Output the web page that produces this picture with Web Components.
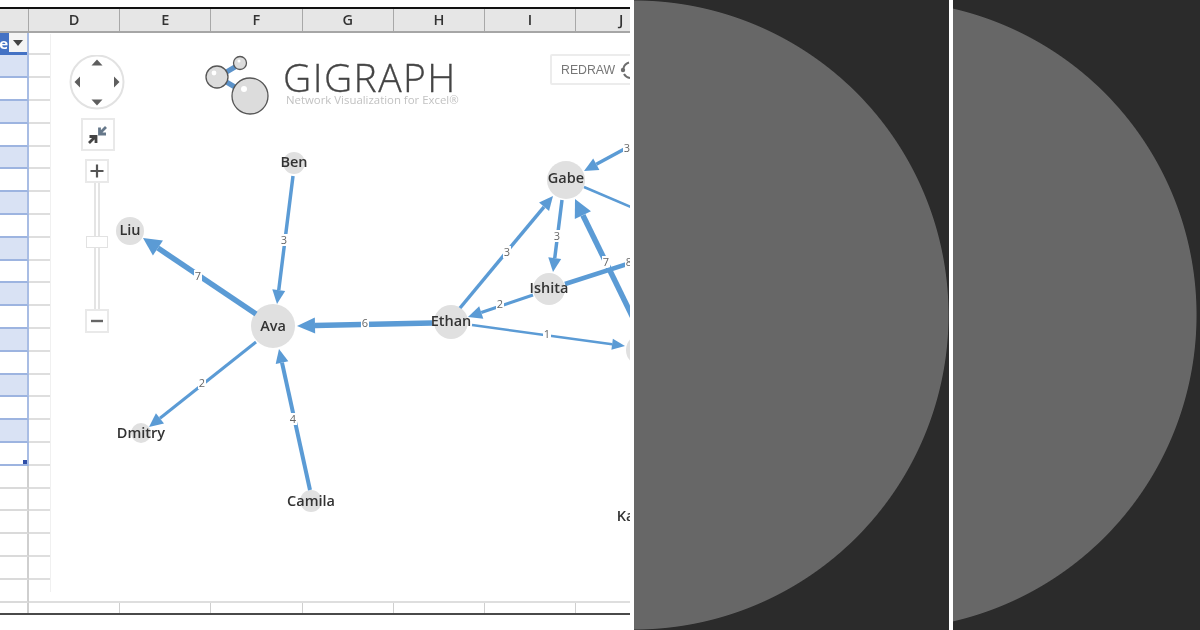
<!DOCTYPE html>
<html>
<head>
<meta charset="utf-8">
<title>Gigraph</title>
<style>
  html, body { margin: 0; padding: 0; background: #fff; }
  body { width: 1200px; height: 630px; overflow: hidden; font-family: "Open Sans", sans-serif; }
</style>
</head>
<body>
<promo-card>
  <excel-sheet>
    <graph-chart></graph-chart>
  </excel-sheet>
  <half-disc style="--w:315px;--cx:0px"></half-disc>
  <half-disc style="--w:247px;--cx:-71px"></half-disc>
</promo-card>

<script>
class PromoCard extends HTMLElement {
  constructor() {
    super();
    this.attachShadow({ mode: "open" }).innerHTML = `
      <style>
        :host { display: flex; gap: 4px; width: 1200px; height: 630px; background: #fff; }
      </style>
      <slot></slot>`;
  }
}

class HalfDisc extends HTMLElement {
  constructor() {
    super();
    this.attachShadow({ mode: "open" }).innerHTML = `
      <style>
        :host {
          display: block;
          flex: none;
          width: var(--w);
          height: 630px;
          background: radial-gradient(circle 315px at var(--cx) 50%, #676767 99.7%, #2b2b2b 100%);
        }
      </style>`;
  }
}

class ExcelSheet extends HTMLElement {
  constructor() {
    super();
    const letters = ["D", "E", "F", "G", "H", "I", "J"];
    const heads = letters.map((l) => `<div class="head">${l}</div>`).join("");
    const ticks = letters.map(() => `<div class="tick"></div>`).join("");

    let rows = `
      <div class="row title">
        <div class="a"><span class="clip">e</span><span class="filter"><i></i></span></div>
        <div class="b"></div>
      </div>`;
    for (let i = 0; i < 24; i++) {
      const inTable = i < 18;
      const band = inTable && i % 2 === 0 ? " band" : "";
      const table = inTable ? " table" : "";
      const handle = i === 17 ? `<i class="handle"></i>` : "";
      rows += `<div class="row${table}${band}"><div class="a">${handle}</div><div class="b"></div></div>`;
    }

    this.attachShadow({ mode: "open" }).innerHTML = `
      <style>
        :host {
          display: block;
          position: relative;
          flex: none;
          width: 630px;
          height: 630px;
          overflow: hidden;
          background: #fff;
          filter: blur(0.35px);
        }
        .frame { display: flex; flex-direction: column; padding-top: 7px; height: 615px; box-sizing: border-box; border-bottom: 2px solid #4a4a4a; }
        .heads {
          display: flex;
          flex: none;
          height: 22px;
          border-top: 2px solid #111;
          border-bottom: 2px solid #a6a6a6;
          background: #e6e6e6;
        }
        .corner { flex: none; width: 28px; box-sizing: border-box; }
        .head {
          flex: none;
          width: 91.2px;
          box-sizing: border-box;
          border-left: 1px solid #a8a8a8;
          text-align: center;
          font: 600 14.5px/22px "Open Sans", sans-serif;
          color: #333;
        }
        .row { display: flex; flex: none; height: 22.8px; box-sizing: border-box; }
        .row .a {
          position: relative;
          flex: none;
          width: 29px;
          box-sizing: border-box;
          border-right: 2px solid #cfcfcf;
          border-bottom: 2px solid #dadada;
        }
        .row .b { flex: 1; border-bottom: 2px solid #dedede; }
        .row.table .a { border-right-color: #a9bde4; border-bottom-color: #9db4e0; }
        .row.band .a { background: #d9e2f4; }
        .row.title { height: 22.4px; }
        .row.title .a {
          display: flex;
          justify-content: flex-end;
          align-items: flex-start;
          overflow: hidden;
          background: #4472c4;
          border-right-color: #a9bde4;
          border-bottom: 0;
        }
        .clip { font: 700 15px/20px "Open Sans", sans-serif; color: #fff; margin-right: 1px; }
        .filter {
          display: flex;
          align-items: center;
          justify-content: center;
          flex: none;
          width: 18px;
          height: 19px;
          background: #f4f4f4;
        }
        .filter i { border: 5px solid transparent; border-top: 6px solid #444; border-bottom: 0; }
        .handle { position: absolute; right: 0; bottom: 0; width: 4px; height: 4px; background: #2f4fa8; }
        .rows { display: flex; flex-direction: column; flex: none; }
        .foot { display: flex; flex: 1; }
        .foot .corner { border-right: 2px solid #cfcfcf; width: 29px; }
        .tick { flex: none; width: 91.2px; box-sizing: border-box; border-right: 1px solid #cfcfcf; }
        .foot .tick:first-of-type { margin-left: -1px; }
      </style>
      <div class="frame">
        <div class="heads"><div class="corner"></div>${heads}</div>
        <div class="rows">${rows}</div>
        <div class="foot"><div class="corner"></div>${ticks}</div>
      </div>
      <slot></slot>`;
  }
}

class GraphChart extends HTMLElement {
  constructor() {
    super();
    this.attachShadow({ mode: "open" }).innerHTML = `
      <style>
        :host {
          display: block;
          position: absolute;
          left: 50px;
          top: 34px;
          width: 590px;
          height: 558px;
          background: #fff;
          border-left: 1px solid #f0f0f0;
        }
        network-graph { position: absolute; inset: 0; }
        zoom-controls { position: absolute; left: 18px; top: 21px; }
        gi-logo { position: absolute; left: 153px; top: 20px; }
        redraw-button { position: absolute; left: 499px; top: 20px; }
      </style>
      <network-graph></network-graph>
      <zoom-controls></zoom-controls>
      <gi-logo></gi-logo>
      <redraw-button></redraw-button>`;
  }
}

class ZoomControls extends HTMLElement {
  constructor() {
    super();
    this.attachShadow({ mode: "open" }).innerHTML = `
      <style>
        :host { display: flex; flex-direction: column; align-items: center; width: 56px; }
        svg { display: block; }
        .fit {
          display: flex; align-items: center; justify-content: center;
          width: 34px; height: 33px; margin: 7px 0 0 2px; box-sizing: border-box;
          border: 2px solid #e9e9e9;
        }
        .btn {
          display: flex; align-items: center; justify-content: center;
          width: 24px; height: 24px; box-sizing: border-box;
          border: 2px solid #e9e9e9; flex: none; background: #fff;
        }
        .plus { margin-top: 8px; }
        .track {
          display: flex; flex-direction: column; align-items: center;
          width: 6px; height: 126px; box-sizing: border-box;
          border-left: 2px solid #e4e4e4; border-right: 2px solid #e4e4e4;
        }
        .thumb {
          flex: none; width: 22px; height: 12px; margin-top: 53px; margin-left: -8px; margin-right: -8px;
          box-sizing: border-box; border: 1px solid #e2e2e2; background: #fff;
        }
      </style>
      <svg width="56" height="56" viewBox="0 0 56 56">
        <circle cx="28" cy="27" r="26.5" fill="#fff" stroke="#e2e2e2" stroke-width="2"/>
        <g fill="#5e5e5e">
          <polygon points="28,4.5 22.5,10.5 33.5,10.5"/>
          <polygon points="28,50.5 22.5,44.5 33.5,44.5"/>
          <polygon points="5.5,27 11,21.5 11,32.5"/>
          <polygon points="50.5,27 45,21.5 45,32.5"/>
        </g>
      </svg>
      <div class="fit">
        <svg width="24" height="22" viewBox="0 0 24 22" fill="none" stroke-width="2.8">
          <path d="M20 3 13.5 9.5M13.5 3.5V10H20" stroke="#66788a"/>
          <path d="M3 19 9.5 12.5M3.5 12.5H10V19" stroke="#444"/>
        </svg>
      </div>
      <div class="btn plus">
        <svg width="14" height="14" viewBox="0 0 14 14"><path d="M7 .5v13M.5 7h13" stroke="#555" stroke-width="2.2"/></svg>
      </div>
      <div class="track"><div class="thumb"></div></div>
      <div class="btn">
        <svg width="14" height="14" viewBox="0 0 14 14"><path d="M1 7h12" stroke="#666" stroke-width="2.4"/></svg>
      </div>`;
  }
}

class GiLogo extends HTMLElement {
  constructor() {
    super();
    this.attachShadow({ mode: "open" }).innerHTML = `
      <style>
        :host { display: flex; gap: 13px; align-items: flex-start; }
        svg { display: block; flex: none; }
        .words { display: flex; flex-direction: column; padding-top: 4px; }
        .name {
          font: 300 39px/37px "Open Sans", sans-serif;
          letter-spacing: 1.45px;
          color: #444;
          -webkit-text-stroke: 0.3px #444;
          white-space: nowrap;
        }
        .sub {
          font: 400 11.4px/10px "Open Sans", sans-serif;
          color: #c2c2c2;
          margin-left: 3px;
          white-space: nowrap;
        }
      </style>
      <svg width="66" height="62" viewBox="0 0 66 62">
        <path d="M14 23 36 10M14 23 46 42" stroke="#5b92c9" stroke-width="5"/>
        <g stroke="#565656" stroke-width="1.3" fill="#dcdcdc">
          <circle cx="13" cy="23" r="11"/>
          <circle cx="36" cy="9" r="6.5"/>
          <circle cx="46" cy="42" r="18"/>
        </g>
        <g fill="#fff">
          <circle cx="10" cy="19" r="2.4"/>
          <circle cx="35" cy="7" r="1.5"/>
          <circle cx="40" cy="35" r="3"/>
        </g>
      </svg>
      <div class="words">
        <div class="name">GIGRAPH</div>
        <div class="sub">Network Visualization for Excel®</div>
      </div>`;
  }
}

class RedrawButton extends HTMLElement {
  constructor() {
    super();
    this.attachShadow({ mode: "open" }).innerHTML = `
      <style>
        :host {
          display: flex; align-items: center; gap: 4px;
          width: 110px; height: 31px; padding-left: 9px; box-sizing: border-box;
          border: 2px solid #ececec; border-radius: 2px; background: #fff;
          font: 400 12.3px "Liberation Sans", sans-serif; color: #777;
        }
        svg { flex: none; }
      </style>
      <span>REDRAW</span>
      <svg width="20" height="20" viewBox="0 0 20 20" fill="none">
        <path d="M10 2.5A8 8 0 0 0 4.5 8" stroke="#6d6d6d" stroke-width="2"/>
        <path d="M5 14A8 8 0 0 0 11 18" stroke="#6d6d6d" stroke-width="2"/>
        <circle cx="4" cy="10" r="2.2" fill="#6d6d6d"/>
      </svg>`;
  }
}

class NetworkGraph extends HTMLElement {
  constructor() {
    super();

    // page coordinates, taken off the reference: name, x, y, radius, label baseline
    const nodes = [
      ["Ben", 294, 163, 11, 167],
      ["Liu", 130, 231, 14, 235],
      ["Ava", 273, 326, 22, 331],
      ["Ethan", 451, 322, 17, 326],
      ["Gabe", 566, 180, 19, 183],
      ["Ishita", 549, 289, 16, 293],
      ["Dmitry", 141, 433, 10, 438],
      ["Camila", 311, 501, 11, 506],
      ["", 642, 350, 16, 0],
      ["Ka", 625.5, 516, 0, 521],
    ];
    // x1, y1, x2, y2, width, head length, head half width, label, label x, label y
    const edges = [
      [293, 176, 277, 304, 3.5, 14, 6.5, "3", 284, 240],
      [256, 314, 143, 238, 5.5, 18, 9, "7", 198, 276],
      [432, 323, 297, 326, 5.5, 18, 8, "6", 365, 323],
      [256, 342, 149, 427, 3, 14, 6.5, "2", 202, 383],
      [310, 490, 279, 349, 4, 14, 6.5, "4", 293, 419],
      [460, 308, 553, 196, 3.5, 14, 6.5, "3", 507, 252],
      [562, 200, 553, 272, 3.5, 14, 6.5, "3", 557, 236],
      [533, 295, 468, 317, 3, 14, 6.5, "2", 500, 304],
      [472, 325, 625, 346, 2.5, 13, 5.5, "1", 547, 334],
      [632, 145, 584, 171, 3.5, 14, 6.5, "3", 627, 148],
      [584, 187, 640, 211, 2.5, 0, 0, "", 0, 0],
      [636, 324, 575, 199, 5.5, 18, 9, "7", 606, 262],
      [565, 284, 640, 260, 4.5, 0, 0, "8", 629, 262],
    ];

    const edgeSvg = edges.map(([x1, y1, x2, y2, w, len, half, label, lx, ly]) => {
      const d = Math.hypot(x2 - x1, y2 - y1);
      const ux = (x2 - x1) / d;
      const uy = (y2 - y1) / d;
      const bx = x2 - ux * len;
      const by = y2 - uy * len;
      let out = `<line x1="${x1}" y1="${y1}" x2="${bx}" y2="${by}" stroke="#5b9bd5" stroke-width="${w}"/>`;
      if (len) {
        out += `<polygon fill="#5b9bd5" points="${x2},${y2} ${bx - uy * half},${by + ux * half} ${bx + uy * half},${by - ux * half}"/>`;
      }
      if (label) {
        out += `<rect x="${lx - 4}" y="${ly - 6}" width="8" height="12" fill="#fff"/>`;
        out += `<text class="w" x="${lx}" y="${ly + 4}">${label}</text>`;
      }
      return out;
    }).join("");

    const circles = nodes.map(([, x, y, r]) => r ? `<circle cx="${x}" cy="${y}" r="${r}" fill="#e0e0e0"/>` : "").join("");
    const names = nodes.map(([name, x, , , ty]) => name ? `<text class="n" x="${x}" y="${ty}">${name}</text>` : "").join("");

    this.attachShadow({ mode: "open" }).innerHTML = `
      <style>
        :host { display: block; }
        svg { display: block; overflow: hidden; }
        text { text-anchor: middle; font-family: "Open Sans", sans-serif; }
        .n { font-size: 14.5px; font-weight: 600; fill: #333; }
        .w { font-size: 11px; fill: #666; }
      </style>
      <svg width="580" height="558" viewBox="51 34 580 558">
        ${circles}${edgeSvg}${names}
      </svg>`;
  }
}

customElements.define("promo-card", PromoCard);
customElements.define("half-disc", HalfDisc);
customElements.define("excel-sheet", ExcelSheet);
customElements.define("graph-chart", GraphChart);
customElements.define("zoom-controls", ZoomControls);
customElements.define("gi-logo", GiLogo);
customElements.define("redraw-button", RedrawButton);
customElements.define("network-graph", NetworkGraph);
</script>
</body>
</html>
